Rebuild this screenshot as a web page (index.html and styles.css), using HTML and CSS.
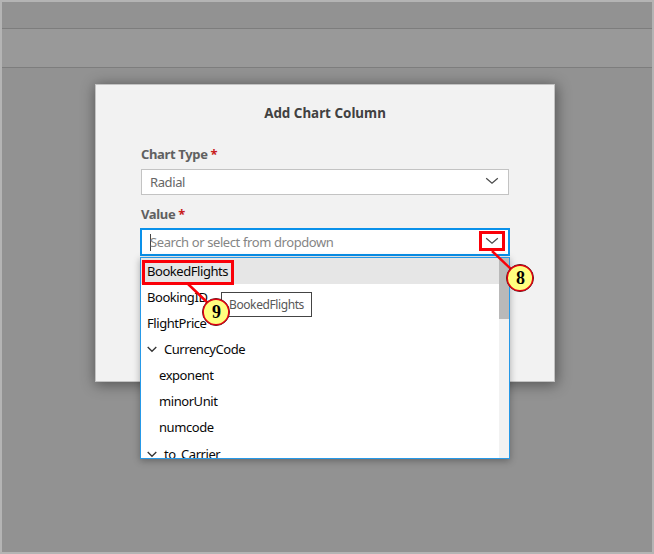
FILE: index.html
```html
<!DOCTYPE html>
<html lang="en">
<head>
<meta charset="utf-8">
<title>Add Chart Column</title>
<link rel="stylesheet" href="styles.css">
</head>
<body>
<div class="screen">
  <div class="topbar"></div>
  <div class="toolbar"></div>
  <main class="workspace">
    <section class="dialog">
      <h1 class="title">Add Chart Column</h1>
      <label class="label">Chart Type <span class="required">*</span></label>
      <div class="field">
        <span class="selected">Radial</span>
        <svg class="chevron" width="14" height="8" viewBox="0 0 14 8"><path d="M1.2 1.2 7 6.2l5.8-5"/></svg>
      </div>
      <label class="label label-value">Value <span class="required">*</span></label>
      <div class="combo">
        <div class="field focused">
          <span class="placeholder">Search or select from dropdown</span>
          <svg class="chevron" width="14" height="8" viewBox="0 0 14 8"><path d="M1.2 1.2 7 6.2l5.8-5"/></svg>
        </div>
        <div class="menu">
          <ul class="options">
            <li class="option active">BookedFlights</li>
            <li class="option">BookingID</li>
            <li class="option">FlightPrice</li>
            <li class="option group"><svg class="caret" width="10" height="7" viewBox="0 0 10 7"><path d="M.7 1 5 5.3 9.300 1"/></svg>CurrencyCode</li>
            <li class="option child">exponent</li>
            <li class="option child">minorUnit</li>
            <li class="option child">numcode</li>
            <li class="option group last"><svg class="caret" width="10" height="7" viewBox="0 0 10 7"><path d="M.7 1 5 5.3 9.300 1"/></svg>to_Carrier</li>
          </ul>
          <div class="scrollbar"><div class="thumb"></div></div>
        </div>
      </div>
    </section>
  </main>
  <div class="tooltip">BookedFlights</div>
  <svg class="callouts" width="654" height="554" viewBox="0 0 654 554">
    <g class="frame">
      <rect x="143.500" y="261.500" width="89" height="22"/>
      <rect x="480.500" y="232.500" width="23" height="17"/>
      <path d="M188 284l22 21M492 251l21 20"/>
    </g>
    <g class="shade"><circle cx="216" cy="312" r="13.500"/><circle cx="520" cy="278" r="13.500"/></g>
    <g class="badge"><circle cx="216" cy="312" r="12.800"/><circle cx="520" cy="278" r="12.800"/></g>
    <text x="216.500" y="317.500">9</text>
    <text x="520.500" y="283.500">8</text>
  </svg>
</div>
</body>
</html>
```
FILE: styles.css
```css
* { box-sizing: border-box; }
body { margin: 0; font-family: "Noto Sans", "Open Sans", sans-serif; font-size: 13px; }
.screen { position: relative; display: flex; flex-direction: column; width: 654px; height: 554px; border: 2px solid #b4b4b4; background: #929292; overflow: hidden; }
.topbar { height: 27px; flex: none; border-bottom: 1px solid #7d7d7d; }
.toolbar { height: 39px; flex: none; background: #999; border-bottom: 1px solid #7d7d7d; }
.workspace { flex: 1; padding: 16px 0 0 93px; }
.dialog { width: 460px; height: 298px; padding: 0 45px; background: #f2f2f2; border: 1px solid #c3c3c3; box-shadow: 1px 2px 13px 1px rgba(0, 0, 0, .42); }
.title { margin: 0; height: 57px; line-height: 57px; text-align: center; font-size: 13.4px; font-weight: 700; color: #414141; }
.label { display: block; height: 27px; line-height: 24px; font-weight: 700; letter-spacing: -.35px; color: #606060; white-space: nowrap; }
.label-value { height: 33px; line-height: 38px; }
.required { color: #c81c1c; }
.field { display: flex; align-items: center; justify-content: space-between; height: 26px; padding: 0 9px 0 8px; background: #fff; border: 1px solid #c3c3c3; color: #666; letter-spacing: -.4px; white-space: nowrap; }
.combo { position: relative; margin: 0 -1px; }
.focused { height: 28px; padding: 0 9px 0 8px; border: 2px solid #0a91ea; }
.placeholder { color: #858585; border-left: 1px solid #444; line-height: 17px; text-indent: -1px; }
.chevron { margin-bottom: 2px; fill: none; stroke: #4a4a4a; stroke-width: 1.2; }
.focused .chevron { margin-bottom: 3px; }
.menu { position: absolute; top: 29px; left: 0; z-index: 2; display: flex; width: 370px; height: 202px; background: #fff; border: 1px solid #2699e8; box-shadow: 0 2px 7px rgba(0, 0, 0, .3); overflow: hidden; }
.options { flex: 1; margin: 0; padding: 0; list-style: none; color: #080808; }
.option { display: flex; align-items: center; height: 26px; padding-left: 6px; line-height: 26px; letter-spacing: -.44px; white-space: nowrap; }
.last { padding-top: 2px; }
.active { background: #e6e6e6; }
.group { gap: 7px; }
.child { padding-left: 18px; }
.caret { fill: none; stroke: #333; stroke-width: 1.3; }
.scrollbar { width: 10px; background: #f2f2f2; }
.thumb { height: 61px; background: #b9b9b9; }
.tooltip { position: absolute; left: 219px; top: 290px; z-index: 3; width: 91px; height: 25px; padding-left: 7px; line-height: 24px; background: #fff; border: 1px solid #444; color: #575757; font-size: 12px; letter-spacing: -.4px; white-space: nowrap; }
.callouts { position: absolute; left: -2px; top: -2px; z-index: 4; }
.frame { fill: none; stroke: #fa0008; stroke-width: 3; }
.frame path { stroke-width: 2.500; }
.shade { fill: none; stroke: #222; stroke-width: 1; }
.badge { fill: #ffff80; stroke: #e00010; stroke-width: 1.500; }
.callouts text { font: 700 18px "Liberation Serif", serif; text-anchor: middle; fill: #000; }
```
